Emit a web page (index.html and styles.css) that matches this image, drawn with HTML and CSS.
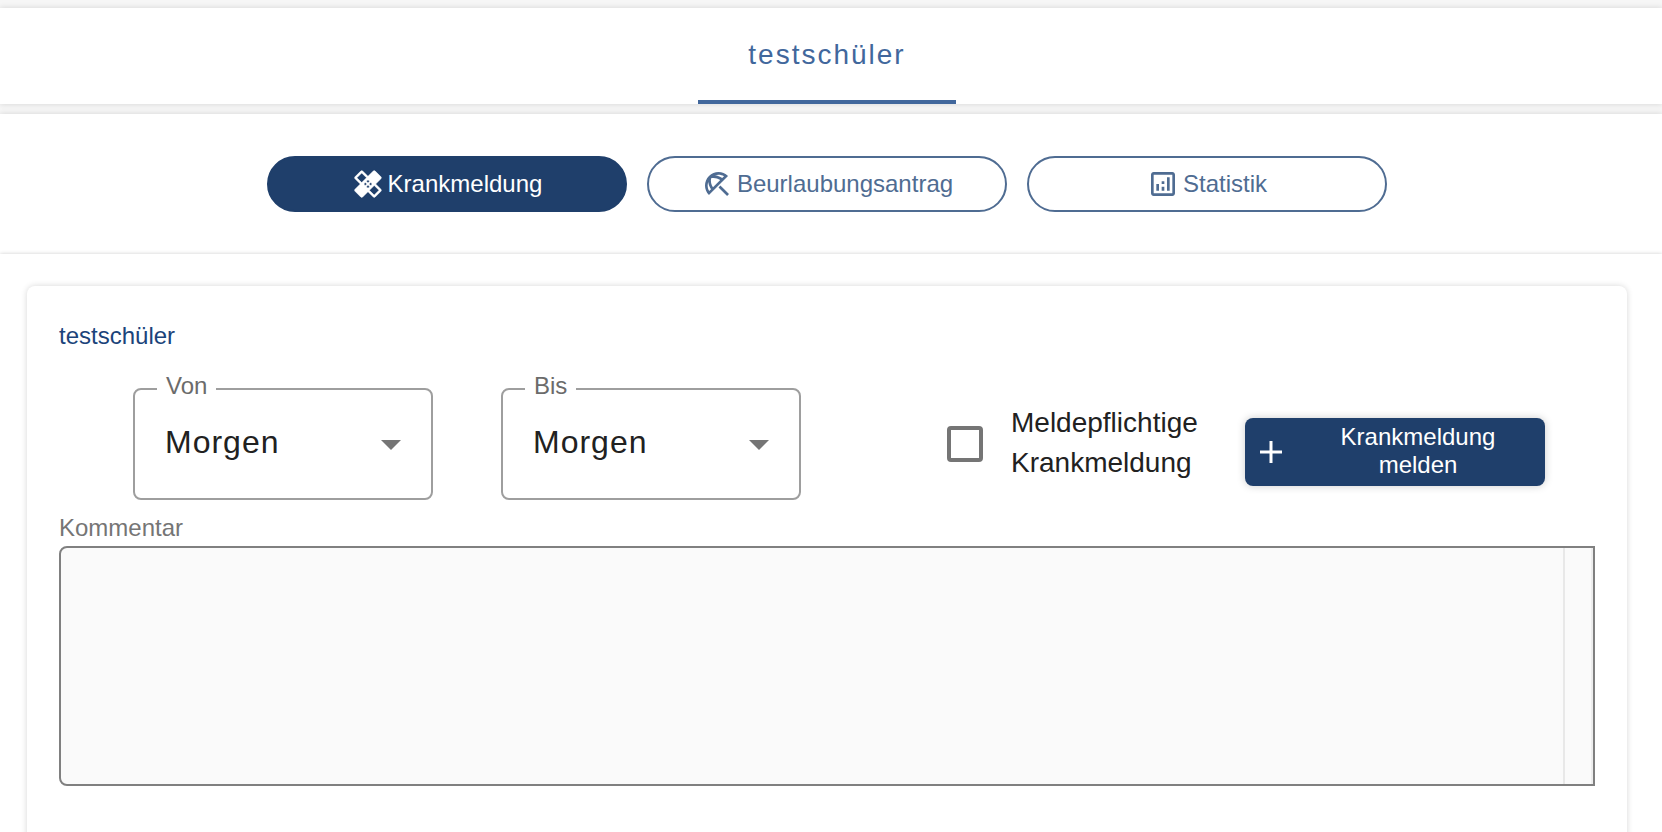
FILE: index.html
```html
<!DOCTYPE html>
<html lang="de">
<head>
  <meta charset="UTF-8">
  <meta name="viewport" content="width=device-width, initial-scale=1.0">
  <title>Krankmeldung</title>
  <link rel="stylesheet" href="styles.css">
</head>
<body>
  <!-- Student tabs -->
  <div class="tab-bar">
    <button type="button" class="tab">testschüler</button>
  </div>

  <!-- Section navigation -->
  <nav class="section-nav">
    <button type="button" class="pill pill-active">
      <svg class="icon icon-bold" viewBox="0 0 24 24" aria-hidden="true"><path d="M17.73 12.02l3.98-3.98c.39-.39.39-1.02 0-1.41l-4.34-4.34c-.39-.39-1.02-.39-1.41 0l-3.98 3.98L8 2.29C7.8 2.1 7.55 2 7.29 2c-.25 0-.51.1-.7.29L2.25 6.63c-.39.39-.39 1.02 0 1.41l3.98 3.98L2.25 16c-.39.39-.39 1.02 0 1.41l4.34 4.34c.39.39 1.02.39 1.41 0l3.98-3.98 3.98 3.98c.2.2.45.29.71.29.26 0 .51-.1.71-.29l4.34-4.34c.39-.39.39-1.02 0-1.41l-3.99-3.98zM12 9c.55 0 1 .45 1 1s-.45 1-1 1-1-.45-1-1 .45-1 1-1zm-4.71 1.96L3.66 7.34l3.63-3.63 3.62 3.62-3.62 3.63zM10 13c-.55 0-1-.45-1-1s.45-1 1-1 1 .45 1 1-.45 1-1 1zm2 2c-.55 0-1-.45-1-1s.45-1 1-1 1 .45 1 1-.45 1-1 1zm2-4c.55 0 1 .45 1 1s-.45 1-1 1-1-.45-1-1 .45-1 1-1zm2.66 9.34l-3.63-3.62 3.63-3.63 3.62 3.62-3.62 3.63z"/></svg>
      Krankmeldung
    </button>
    <button type="button" class="pill">
      <svg class="icon" viewBox="0 0 24 24" aria-hidden="true"><path d="M21 19.57l-1.427 1.428-6.442-6.442 1.43-1.428zM13.12 3c-2.58 0-5.16.98-7.14 2.95l-.01.01c-3.95 3.95-3.95 10.36 0 14.31l14.3-14.31C18.3 3.99 15.71 3 13.12 3zM6.14 17.27C5.4 16.03 5 14.61 5 13.12c0-.93.16-1.82.46-2.67.19 1.91.89 3.79 2.07 5.44l-1.39 1.38zm2.84-2.84C7.63 12.38 7.12 9.93 7.6 7.6c.58-.12 1.16-.18 1.75-.18 1.8 0 3.55.55 5.08 1.56l-5.45 5.45zm1.47-8.97c.85-.3 1.74-.46 2.67-.46 1.49 0 2.91.4 4.15 1.14l-1.39 1.39c-1.65-1.18-3.52-1.88-5.43-2.07z"/></svg>
      Beurlaubungsantrag
    </button>
    <button type="button" class="pill">
      <svg class="icon" viewBox="0 0 24 24" aria-hidden="true"><path d="M19 3H5c-1.1 0-2 .9-2 2v14c0 1.1.9 2 2 2h14c1.1 0 2-.9 2-2V5c0-1.1-.9-2-2-2zm0 16H5V5h14v14zM7 12h2v5H7zM15 7h2v10h-2zM11 14h2v3h-2zM11 10h2v2h-2z"/></svg>
      Statistik
    </button>
  </nav>

  <main class="content">
    <form class="card">
      <h2 class="card-title">testschüler</h2>

      <div class="form-row">
        <div class="select-field">
          <select id="von">
            <option>Morgen</option>
          </select>
          <label for="von">Von</label>
          <svg class="arrow" viewBox="0 0 24 24" aria-hidden="true"><path d="M7 10l5 5 5-5z"/></svg>
        </div>

        <div class="select-field">
          <select id="bis">
            <option>Morgen</option>
          </select>
          <label for="bis">Bis</label>
          <svg class="arrow" viewBox="0 0 24 24" aria-hidden="true"><path d="M7 10l5 5 5-5z"/></svg>
        </div>

        <div class="check-field">
          <input type="checkbox" id="meldepflichtig">
          <label for="meldepflichtig">Meldepflichtige Krankmeldung</label>
        </div>

        <button type="button" class="submit">
          <svg class="plus" viewBox="0 0 36 36" aria-hidden="true"><path d="M7 18h22M18 7v22"/></svg>
          <span>Krankmeldung melden</span>
        </button>
      </div>

      <label class="comment-label" for="kommentar">Kommentar</label>
      <textarea class="comment" id="kommentar"></textarea>
    </form>
  </main>
</body>
</html>
```

FILE: styles.css
```css
* {
  box-sizing: border-box;
}
body {
  margin: 0;
  padding-top: 8px;
  font-family: "Liberation Sans", Arial, sans-serif;
  font-size: 24px;
  background-color: #f6f6f6;
}
button, select, textarea {
  font-family: inherit;
  font-size: 24px;
}
button {
  cursor: pointer;
}

/* Tabs */
.tab-bar {
  display: flex;
  justify-content: center;
  height: 96px;
  padding-right: 8px;
  margin-bottom: 10px;
  background-color: #fff;
  box-shadow: 0 0 6px rgba(0, 0, 0, 0.14);
}
.tab {
  padding: 2px 50px 0;
  border: none;
  border-bottom: 4px solid #41679c;
  background: none;
  color: #41679c;
  font-size: 28px;
  letter-spacing: 2px;
}

/* Section navigation */
.section-nav {
  display: flex;
  justify-content: center;
  gap: 20px;
  padding: 42px 8px 42px 0;
  background-color: #fff;
  box-shadow: 0 0 6px rgba(0, 0, 0, 0.14);
}
.pill {
  display: flex;
  align-items: center;
  justify-content: center;
  gap: 4px;
  width: 360px;
  height: 56px;
  padding: 0;
  border: 2px solid #4f6c92;
  border-radius: 28px;
  background-color: #fff;
  color: #4f6c92;
}
.pill-active {
  border-color: #1f3f6b;
  background-color: #1f3f6b;
  color: #fff;
}
.icon {
  width: 32px;
  height: 32px;
  fill: currentColor;
}
.icon-bold {
  stroke: currentColor;
  stroke-width: 0.4;
}

/* Form card */
.content {
  position: relative;
  padding: 32px 35px 0 27px;
  background-color: #fff;
  box-shadow: 0 0 4px rgba(0, 0, 0, 0.2);
}
.card {
  padding: 34px 32px 64px;
  border-radius: 8px;
  background-color: #fff;
  box-shadow: 0 0 6px rgba(0, 0, 0, 0.16);
}
.card-title {
  margin: 0 0 36px;
  color: #1b437a;
  font-size: 24px;
  font-weight: normal;
  line-height: 32px;
}
.form-row {
  display: flex;
  align-items: center;
  gap: 68px;
  padding: 0 50px 0 74px;
  margin-bottom: 12px;
}
.select-field {
  position: relative;
  width: 300px;
}
.select-field select {
  display: block;
  width: 100%;
  height: 112px;
  padding: 0 30px 4px;
  border: 2px solid #9e9e9e;
  border-radius: 8px;
  appearance: none;
  background-color: #fff;
  color: #212121;
  font-size: 32px;
  letter-spacing: 1px;
}
.select-field label {
  position: absolute;
  top: -18px;
  left: 24px;
  padding: 0 9px;
  background-color: #fff;
  color: #6b6b6b;
  line-height: 32px;
}
.arrow {
  position: absolute;
  top: 32px;
  right: 18px;
  width: 48px;
  height: 48px;
  fill: #757575;
  pointer-events: none;
}
.check-field {
  display: flex;
  align-items: center;
  gap: 28px;
  margin-left: auto;
  margin-right: -34px;
}
.check-field input {
  width: 36px;
  height: 36px;
  margin: 0;
  border: 4px solid #757575;
  border-radius: 4px;
  appearance: none;
}
.check-field label {
  width: 200px;
  padding-bottom: 2px;
  color: #212121;
  font-size: 28px;
  line-height: 40px;
}
.submit {
  display: flex;
  align-items: center;
  width: 300px;
  height: 68px;
  padding: 0 8px;
  margin-top: 16px;
  border: none;
  border-radius: 8px;
  background-color: #1f3f6b;
  box-shadow: 0 0 8px rgba(0, 0, 0, 0.2);
  color: #fff;
}
.submit span {
  flex: 1;
  padding: 0 22px 2px 32px;
  line-height: 28px;
}
.plus {
  width: 36px;
  height: 36px;
  stroke: #fff;
  stroke-width: 3;
}

/* Comment */
.comment-label {
  display: block;
  margin-bottom: 2px;
  color: #757575;
  line-height: 32px;
}
.comment {
  display: block;
  width: 100%;
  height: 240px;
  padding: 8px;
  border: 2px solid #808080;
  border-radius: 8px 0 0 8px;
  /* scroll track at the right edge */
  background:
    linear-gradient(#ededed, #ededed) right / 2px 100% no-repeat,
    linear-gradient(#e8e8e8, #e8e8e8) right 28px top / 2px 100% no-repeat,
    #fafafa;
  resize: none;
}
```
